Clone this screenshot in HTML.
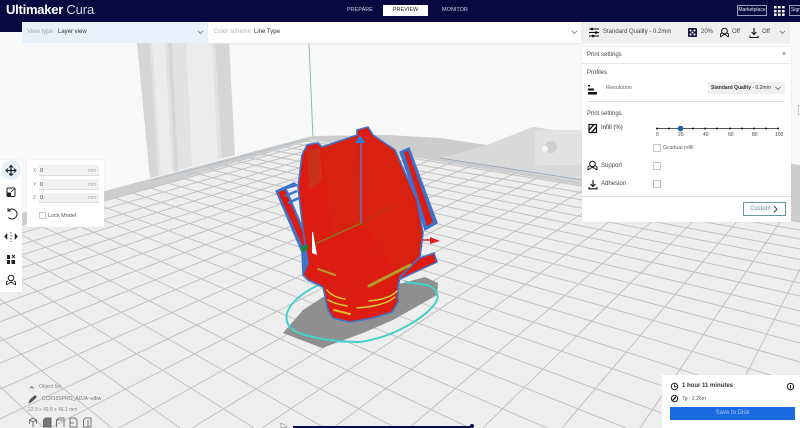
<!DOCTYPE html>
<html style="width:800px;height:428px;overflow:hidden"><head><meta charset="utf-8"><style>
html,body{margin:0;padding:0}
body{width:800px;height:428px;overflow:hidden;position:relative;background:#f8f8f8;font-family:"Liberation Sans","Noto Sans CJK JP",sans-serif;color:#333}
.a{position:absolute;white-space:nowrap}
.t{font-size:6px;line-height:8px}
.box{position:absolute;border:1px solid #c8c8c8;background:#fff;box-sizing:border-box}
svg{position:absolute;left:0;top:0;overflow:hidden}
</style></head><body>
<svg width="800" height="428" viewBox="0 0 800 428" style="filter:blur(.35px)">
<defs><clipPath id="fl"><polygon points="312,139 22,226 0,232 0,428 800,428 800,220"/></clipPath></defs>
<polygon points="137,43 229,43 235,155 150,178" fill="#e2e2e2"/>
<g fill="#d6d6d6"><polygon points="137,43 150,43 158,176 150,178"/><polygon points="168,43 172,43 178,171 175,172"/><polygon points="215,43 229,43 235,155 222,158"/></g>
<g fill="#ececec"><polygon points="152,43 165,43 172,172 161,175"/><polygon points="186,43 212,43 218,160 192,167"/></g>
<line x1="309" y1="43" x2="313" y2="138" stroke="#8db6c4" stroke-width="1"/>
<polygon points="22,213 312,136 388,135 440,138 487,145 533,127 800,165 800,226 312,142 22,226" fill="#cdcdcd"/>
<polygon points="487,145 533,127 582,135 582,182 440,158" fill="#d9d9d9"/>
<rect x="535" y="130" width="47" height="35" rx="3" fill="#e2e2e2"/>
<circle cx="551" cy="147" r="6" fill="#cfcfcf"/><circle cx="545" cy="149" r="3" fill="#f4f4f4"/>
<polygon points="312,140 22,226 0,232 0,428 800,428 800,222" fill="#eeeeee"/>
<g clip-path="url(#fl)" stroke="#c2c2c2" stroke-width="1" fill="none">
<path d="M-380 28L800 222M-380 28L800 230M-380 28L800 239M-380 28L800 249M-380 28L800 259.500M-380 28L800 271M-380 28L800 283M-380 28L800 296M-380 28L800 311M-380 28L800 326M-380 28L800 343M-380 28L800 362M-380 28L800 384M-380 28L800 408M-380 28L785 428M-380 28L702 428M-380 28L626 428M-380 28L547 428M-380 28L470 428M-380 28L396 428M-380 28L325 428M-380 28L254 428M-380 28L180 428M-380 28L112 428M-380 28L44 428"/>
<path d="M956 -37L-708 428M956 -37L-653 428M956 -37L-588 428M956 -37L-533 428M956 -37L-469 428M956 -37L-412 428M956 -37L-346 428M956 -37L-283 428M956 -37L-219 428M956 -37L-155 428M956 -37L-87 428M956 -37L-19 428M956 -37L50 428M956 -37L119 428M956 -37L192 428M956 -37L262 428M956 -37L333 428M956 -37L409 428M956 -37L483 428M956 -37L562 428M956 -37L640 428M956 -37L719 428M956 -37L799 428"/>
</g>
<line x1="440" y1="158" x2="582" y2="180" stroke="#8fa6bd" stroke-width=".8"/>
<line x1="150" y1="181" x2="308" y2="139" stroke="#a9bccb" stroke-width=".8"/>
<!-- shadow -->
<polygon points="283,333 303,310 323,297 403,283 425,277 438,283 437,295 393,320 363,333 322,348" fill="#8f8f8f"/>
<!-- ring -->
<path d="M323 283Q293 296 287 313Q284 327 299 333Q325 342 360 342Q385 338 403 328Q430 314 437 300Q440 290 427 285L405 282" fill="none" stroke="#45d0c8" stroke-width="2"/>
<!-- left arm -->
<polygon points="276,191 294,183 303,190 305,233 310,267 303,275 302,252" fill="#3f73c9" stroke="#3f73c9" stroke-width="1.500" stroke-linejoin="round"/>
<polygon points="278,192 285,190 306,240 303,247" fill="#de1b12"/>
<polygon points="287,189 298,186 305,232" fill="#e8eefc"/>
<path d="M285 196L297 191M288 203L299 198" stroke="#3f73c9" stroke-width="2.500"/>
<!-- right arm -->
<polygon points="400,152 409,148 437,223 425,230 415,195" fill="#3f73c9" stroke="#3f73c9" stroke-width="1.500" stroke-linejoin="round"/>
<polygon points="404,152 408,151 433,222 427,226" fill="#de1b12"/>
<polygon points="408,262 434,253 437,262 398,280" fill="#de1b12" stroke="#3f73c9" stroke-width="1.500"/>
<!-- body -->
<polygon points="302,155 307,145 318,143 322,147 357,135 357,130 368,127 373,135 395,150 417,200 423,233 420,257 400,277 398,287 398,302 392,312 373,318 350,322 333,318 328,310 323,287 308,280 303,275 308,263 303,230 298,187" fill="#dc1c11" stroke="#3f73c9" stroke-width="1.600" stroke-linejoin="round"/>
<polygon points="322,148 357,136 362,222 332,236" fill="#d6220f"/>
<polygon points="307,150 320,148 322,180 309,190" fill="#c9321a"/>
<polygon points="362,136 374,138 395,152 415,205 420,235 418,255 398,275 362,222" fill="#d8210f"/>
<!-- stripes -->
<g fill="none" stroke-linecap="round">
<path d="M327 290Q332 297 345 299" stroke="#d8cc30" stroke-width="1.500"/>
<path d="M328 300Q335 304 347 306" stroke="#d8cc30" stroke-width="1.500"/>
<path d="M334 310L350 314" stroke="#d8c030" stroke-width="2"/>
<path d="M369 301Q390 299 397 291" stroke="#d8cc30" stroke-width="1.500"/>
<path d="M357 308Q385 306 395 297" stroke="#d8cc30" stroke-width="1.500"/>
<path d="M369 286L410 265" stroke="#b59a2a" stroke-width="3"/>
<path d="M318 269L335 275" stroke="#b59a2a" stroke-width="2"/>
<path d="M361 140L361 222" stroke="#5a79c0" stroke-width="1.400"/>
<path d="M362 223L317 243" stroke="#877d20" stroke-width="1.500"/>
<path d="M362 223L392 205" stroke="#b03a14" stroke-width="1"/>
</g>
<polygon points="360,135 365,143 355,143" fill="#2a7de0"/>
<polygon points="301,246 309,245 306,251 301,252" fill="#17893c"/>
<polygon points="430,237 440,241 430,244" fill="#d92020"/>
<line x1="423" y1="240" x2="431" y2="240" stroke="#d92020" stroke-width="1.500"/>
<polygon points="312,232 313,232 317,255 312,253" fill="#fff"/>
<!-- bottom slider -->
<rect x="293" y="426" width="178" height="2" fill="#080c48"/><circle cx="472" cy="426" r="2" fill="#080c48"/>
<path d="M281 423L287 427L283 427.500L281 427.500Z" fill="#fff" stroke="#555" stroke-width=".5"/>
</svg>

<!-- top bar -->
<div class="a" style="left:0;top:0;width:800px;height:22px;background:#060a40"></div>
<div class="a" style="left:0;top:22px;width:22px;height:10px;background:#060a40"></div>
<div class="a" style="left:6px;top:1px;font-size:13px;line-height:18px;font-weight:bold;color:#fff;letter-spacing:-.25px">Ultimaker <span style="font-weight:normal;color:#d8d8e4;letter-spacing:-.1px">Cura</span></div>
<div class="a" style="left:347px;top:6px;font-size:5.500px;line-height:8px;color:#cfd0dc">PREPARE</div>
<div class="a" style="left:383px;top:5px;width:45px;height:11px;background:#fff;font-size:5.500px;line-height:11px;text-align:center;color:#222">PREVIEW</div>
<div class="a" style="left:442px;top:6px;font-size:5.500px;line-height:8px;color:#cfd0dc">MONITOR</div>
<div class="a" style="left:737px;top:5px;width:30px;height:11px;box-sizing:border-box;border:1px solid #9a9cb4;font-size:5px;line-height:9px;text-align:center;color:#e8e8ee">Marketplace</div>
<svg width="800" height="22" style="left:0;top:0"><g fill="#fff"><rect x="774" y="6" width="2.600" height="2.400"/><rect x="778" y="6" width="2.600" height="2.400"/><rect x="782" y="6" width="2.600" height="2.400"/><rect x="774" y="10" width="2.600" height="2.400"/><rect x="778" y="10" width="2.600" height="2.400"/><rect x="782" y="10" width="2.600" height="2.400"/><rect x="774" y="13.500" width="2.600" height="2.400"/><rect x="778" y="13.500" width="2.600" height="2.400"/><rect x="782" y="13.500" width="2.600" height="2.400"/></g></svg>
<div class="a" style="left:789px;top:5px;width:11px;height:11px;overflow:hidden;box-sizing:border-box;border:1px solid #9a9cb4;border-right:0;font-size:5px;line-height:9px;padding-left:1px;color:#e8e8ee">Sign</div>

<!-- view bar -->
<div class="a" style="left:22px;top:22px;width:186px;height:21px;background:#e6f1fb"></div>
<div class="a" style="left:208px;top:22px;width:373px;height:21px;background:#fff;box-shadow:0 1px 1px #e4e4e4"></div>
<div class="a" style="left:581px;top:22px;width:209px;height:21px;background:#efefef"></div>
<div class="a t" style="left:27px;top:28px;color:#a0a8b0">View type</div>
<div class="a t" style="left:58px;top:28px;color:#333">Layer view</div>
<div class="a t" style="left:214px;top:28px;color:#b0b0b0">Color scheme</div>
<div class="a t" style="left:254px;top:28px;color:#333">Line Type</div>
<div class="a t" style="left:603px;top:28px;color:#444">Standard Quality - 0.2mm</div>
<div class="a t" style="left:701px;top:28px;color:#444">20%</div>
<div class="a t" style="left:732px;top:28px;color:#444">Off</div>
<div class="a t" style="left:762px;top:28px;color:#444">Off</div>
<svg width="800" height="46" style="left:0;top:0" fill="none" stroke="#111">
<path d="M198 31l2.500 2.500 2.500-2.500M572 31l2.500 2.500 2.500-2.500M780 31l2.500 2.500 2.500-2.500" stroke="#777" stroke-width=".8"/>
<path d="M589 29h10M589 32.500h10M589 36h10" stroke-width="1"/><circle cx="592" cy="29" r="1.300" fill="#111" stroke="none"/><circle cx="596" cy="32.500" r="1.300" fill="#111" stroke="none"/><circle cx="593" cy="36" r="1.300" fill="#111" stroke="none"/>
<rect x="688" y="28" width="9" height="9" rx="1" fill="#14183c" stroke="none"/><g fill="#fff" stroke="none"><circle cx="690.500" cy="30.500" r="1"/><circle cx="694.500" cy="30.500" r="1"/><circle cx="692.500" cy="32.500" r="1"/><circle cx="690.500" cy="34.500" r="1"/><circle cx="694.500" cy="34.500" r="1"/></g>
<circle cx="724.500" cy="31" r="2.800" stroke-width="1"/><path d="M720.500 37l4-3 4 3M720.500 37v-3l1.500-1M728.500 37v-3l-1.500-1" stroke-width=".9"/>
<path d="M754 28v6M751.500 32l2.500 2.500 2.500-2.500M750 35.500v2h8v-2" stroke-width="1.100"/>
</svg>

<!-- print settings -->
<div class="a" style="left:582px;top:47px;width:209px;height:175px;background:#fff;box-shadow:0 0 1px #ccc"></div>
<div class="a" style="left:582px;top:63px;width:209px;height:1px;background:#e4e4e4"></div>
<div class="a" style="left:587px;top:101px;width:198px;height:1px;background:#e0e0e0"></div>
<div class="a" style="left:582px;top:196px;width:209px;height:1px;background:#dedede"></div>
<div class="a t" style="left:587px;top:51px;color:#444">Print settings</div>
<div class="a" style="left:782px;top:51px;font-size:7px;line-height:8px;color:#555">×</div>
<div class="a t" style="left:587px;top:69px;color:#444">Profiles</div>
<div class="a t" style="left:606px;top:84px;color:#666;font-size:5.500px">Resolution</div>
<div class="a" style="left:708px;top:82px;width:77px;height:12px;background:#f0f0f0"></div>
<div class="a" style="left:711px;top:84px;font-size:5px;line-height:8px;color:#333"><b>Standard Quality</b> - 0.2mm</div>
<div class="a t" style="left:587px;top:110px;color:#444">Print settings</div>
<div class="a t" style="left:601px;top:124px;color:#333">Infill (%)</div>
<div class="a t" style="left:601px;top:162px;color:#444">Support</div>
<div class="a t" style="left:601px;top:180px;color:#444">Adhesion</div>
<div class="a" style="left:663px;top:144px;font-size:5.500px;line-height:8px;color:#666">Gradual infill</div>
<div class="box" style="left:653px;top:144px;width:8px;height:8px"></div>
<div class="box" style="left:653px;top:162px;width:8px;height:8px"></div>
<div class="box" style="left:653px;top:180px;width:8px;height:8px"></div>
<div class="a" style="left:656px;top:131px;width:126px;font-size:5px;line-height:8px;color:#444;">
<span class="a" style="left:0">0</span><span class="a" style="left:22px">20</span><span class="a" style="left:47px">40</span><span class="a" style="left:72px">60</span><span class="a" style="left:96px">80</span><span class="a" style="left:119px">100</span></div>
<svg width="800" height="230" style="left:0;top:0" fill="none" stroke="#111">
<path d="M656 128.500H779" stroke="#222" stroke-width=".8"/>
<g fill="#111" stroke="none"><circle cx="657" cy="128.500" r="1"/><circle cx="669" cy="128.500" r="1"/><circle cx="693" cy="128.500" r="1"/><circle cx="705" cy="128.500" r="1"/><circle cx="717" cy="128.500" r="1"/><circle cx="730" cy="128.500" r="1"/><circle cx="742" cy="128.500" r="1"/><circle cx="754" cy="128.500" r="1"/><circle cx="766" cy="128.500" r="1"/><circle cx="778" cy="128.500" r="1"/></g>
<circle cx="680.500" cy="128.500" r="2.800" fill="#1d5ea8" stroke="none"/>
<path d="M588 85h2v1.500h-2zM588 88.500h6v2h-6zM588 92h9v2.500h-9z" fill="#111" stroke="none"/>
<path d="M775.500 87l2.500 2.500 2.500-2.500" stroke="#666" stroke-width=".8"/>
<rect x="589" y="124.500" width="7.500" height="8" stroke-width="1.200"/><path d="M589 130l5-5.500M591 133l5.500-6" stroke-width="1.400"/>
<circle cx="592.500" cy="164" r="2.800" stroke-width="1"/><path d="M588 170l4.500-3 4.500 3M588 170v-3l1.500-1M597 170v-3l-1.500-1" stroke-width=".9"/>
<path d="M593 180v6M590.500 184l2.500 2.500 2.500-2.500M589 187v1.800h8V187" stroke-width="1.100"/>
<path d="M774 206l3 3.200-3 3.200" stroke="#444" stroke-width="1"/>
</svg>
<div class="a" style="left:743px;top:202px;width:43px;height:14px;box-sizing:border-box;border:1px solid #669a9c;font-size:6px;line-height:12px;padding-left:6px;color:#5c8f92">Custom</div>
<div class="box" style="left:798px;top:105px;width:2px;height:10px;border-right:0"></div>

<!-- left toolbar -->
<div class="a" style="left:0;top:160px;width:22px;height:132px;background:#fff;box-shadow:0 0 1px #ddd"></div>
<div class="a" style="left:1px;top:160px;width:20px;height:20px;border-radius:50%;background:#e6f1fb"></div>
<div class="a" style="left:27px;top:160px;width:77px;height:67px;background:#fff;box-shadow:0 0 1px #ddd"></div>
<div class="a" style="left:39px;top:165px;width:60px;height:10px;background:#f1f1f1;border-bottom:1px solid #ddd"></div>
<div class="a" style="left:39px;top:179px;width:60px;height:10px;background:#f1f1f1;border-bottom:1px solid #ddd"></div>
<div class="a" style="left:39px;top:193px;width:60px;height:9px;background:#f1f1f1;border-bottom:1px solid #ddd"></div>
<div class="a" style="left:33px;top:167px;font-size:5px;line-height:8px;color:#888">X</div>
<div class="a" style="left:33px;top:181px;font-size:5px;line-height:8px;color:#888">Y</div>
<div class="a" style="left:33px;top:194px;font-size:5px;line-height:8px;color:#888">Z</div>
<div class="a" style="left:40px;top:167px;font-size:5.500px;line-height:8px;color:#444">0</div>
<div class="a" style="left:40px;top:181px;font-size:5.500px;line-height:8px;color:#444">0</div>
<div class="a" style="left:40px;top:194px;font-size:5.500px;line-height:8px;color:#444">0</div>
<div class="a" style="left:88px;top:167px;font-size:5px;line-height:8px;color:#aaa">mm</div>
<div class="a" style="left:88px;top:181px;font-size:5px;line-height:8px;color:#aaa">mm</div>
<div class="a" style="left:88px;top:194px;font-size:5px;line-height:8px;color:#aaa">mm</div>
<div class="box" style="left:39px;top:212px;width:7px;height:7px"></div>
<div class="a" style="left:48px;top:212px;font-size:5.500px;line-height:8px;color:#555">Lock Model</div>
<svg width="30" height="300" style="left:0;top:0" fill="none" stroke="#222">
<path d="M11 166v9M6.500 170.500h9" stroke-width="1.300"/><path d="M9 167.500l2-2 2 2M9 173.500l2 2 2-2M8 168.500l-2 2 2 2M14 168.500l2 2-2 2" stroke-width="1"/>
<rect x="7" y="188" width="8" height="8.500" rx="1" stroke-width="1"/><rect x="7" y="192.500" width="4" height="4" fill="#222" stroke="none"/><path d="M11 192l3-3" stroke-width=".8"/>
<path d="M8 211a5 5 0 1 1 .5 6.500M8 208v3h3" stroke-width="1"/>
<path d="M7 233.500v6l-2.500-3zM15 233.500v6l2.500-3z" fill="#222" stroke-width=".5"/><path d="M11 232v10" stroke-width=".8" stroke-dasharray="1.500 1.500"/>
<path d="M7 255h3v4H7zM7 260h3v4H7zM11.500 260h3.500v4h-3.500z" fill="#222" stroke="none"/><path d="M12 255l3 3M15 255l-3 3" stroke-width=".9"/>
<circle cx="11" cy="278" r="2.800" stroke-width="1"/><path d="M6.500 285l4.500-3 4.500 3M6.500 285v-3l1.500-1M15.500 285v-3l-1.500-1" stroke-width=".9"/>
</svg>

<!-- object list -->
<div class="a" style="left:39px;top:383px;font-size:5px;line-height:8px;color:#8a8a8a">Object list</div>
<div class="a" style="left:42px;top:395px;font-size:5px;line-height:8px;color:#777">CCR10SPRO_ADJA~elbw</div>
<div class="a" style="left:28px;top:406px;font-size:5px;line-height:8px;color:#8a8a8a">22.9 x 49.8 x 46.1 mm</div>
<svg width="100" height="428" style="left:0;top:0" fill="none" stroke="#555" stroke-width=".8">
<path d="M30 388.500l1.800-1.800 1.800 1.800"/>
<path d="M29 403l1-3 5-4.500 1.500 1.500-5 4.500z" fill="#555"/>
<path d="M29.500 424v-4l3.500-2 3.500 2v4M29.500 420l3.500 2 3.500-2M33 422v5"/>
<path d="M43.500 427v-7l2-2h5.500v9z" fill="#777"/>
<path d="M56.500 427v-7l2-2h5.500v9M56.500 420h6"/>
<path d="M70 418h5l2 2v7h-7zM70 423h4"/>
<path d="M83.500 427v-7l2-2h5.500v9zM88 420v7"/>
</svg>

<!-- bottom right -->
<div class="a" style="left:662px;top:375px;width:138px;height:53px;background:#fff"></div>
<div class="a" style="left:682px;top:382px;font-size:6px;line-height:8px;font-weight:bold;color:#333">1 hour 11 minutes</div>
<div class="a" style="left:682px;top:395px;font-size:5px;line-height:8px;color:#555">7g · 2.26m</div>
<div class="a" style="left:670px;top:407px;width:125px;height:13px;background:#1a6be0;font-size:6px;line-height:13px;text-align:center;color:#a6c8f6">Save to Disk</div>
<svg width="800" height="428" style="left:0;top:0" fill="none" stroke="#222" stroke-width="1">
<circle cx="674.500" cy="386.500" r="3.200"/><path d="M674.500 384.500v2.200h2"/>
<circle cx="674.500" cy="398.500" r="3.200"/><path d="M672.500 400.500l3.500-3.500" stroke-width="1.400"/>
<circle cx="790.500" cy="386.500" r="3.200"/><path d="M790.500 385v3.500" stroke-width="1.100"/>
</svg>
</body></html>
